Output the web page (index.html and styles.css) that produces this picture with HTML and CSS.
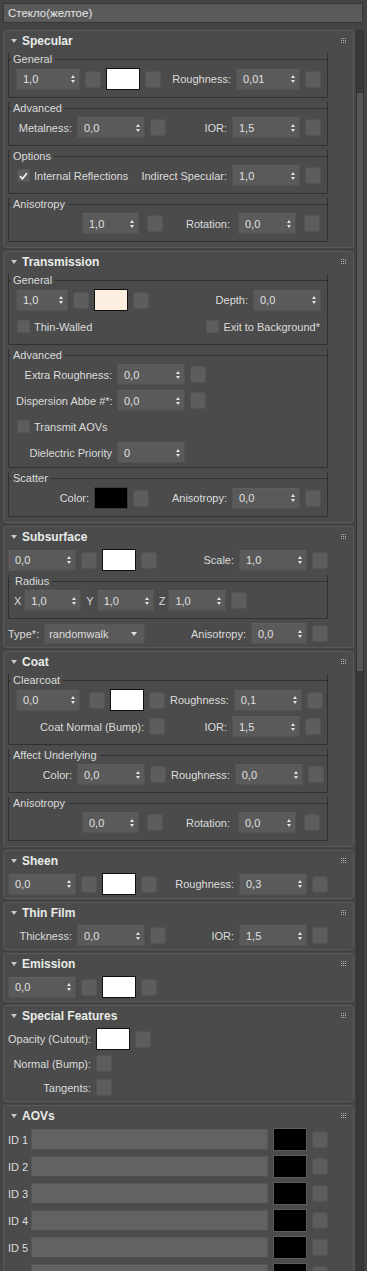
FILE: index.html
```html
<!DOCTYPE html>
<html lang="ru">
<head>
    <meta charset="UTF-8">
    <meta name="viewport" content="width=device-width, initial-scale=1.0">
    <title>Стекло(желтое)</title>
    <link rel="stylesheet" href="styles.css">
</head>
<body>

<div class="title">Стекло(желтое)</div>

<div class="main">
    <div class="rollouts">

        <!-- Specular -->
        <section class="panel">
            <div class="panel-head"><span class="tri"></span><span class="name">Specular</span><span class="grip"></span></div>
            <div class="panel-body">
                <div class="grp">
                    <div class="grp-head"><span>General</span></div>
                    <div class="row">
                        <div class="spin s64"><span>1,0</span><i class="arr"></i></div>
                        <div class="map"></div>
                        <div class="sw"></div>
                        <div class="map"></div>
                        <span class="lbl push">Roughness:</span>
                        <div class="spin s64"><span>0,01</span><i class="arr"></i></div>
                        <div class="map"></div>
                    </div>
                </div>
                <div class="grp">
                    <div class="grp-head"><span>Advanced</span></div>
                    <div class="row">
                        <span class="lbl r w56">Metalness:</span>
                        <div class="spin s68"><span>0,0</span><i class="arr"></i></div>
                        <div class="map"></div>
                        <span class="lbl push">IOR:</span>
                        <div class="spin s68"><span>1,5</span><i class="arr"></i></div>
                        <div class="map"></div>
                    </div>
                </div>
                <div class="grp">
                    <div class="grp-head"><span>Options</span></div>
                    <div class="row">
                        <label class="chk"><span class="box"><svg width="9" height="8" viewBox="0 0 9 8"><path d="M1 4.2l2.4 2.6L8 1" stroke="#f0f0f0" stroke-width="1.7" fill="none"/></svg></span>Internal Reflections</label>
                        <span class="lbl push">Indirect Specular:</span>
                        <div class="spin s68"><span>1,0</span><i class="arr"></i></div>
                        <div class="map"></div>
                    </div>
                </div>
                <div class="grp">
                    <div class="grp-head"><span>Anisotropy</span></div>
                    <div class="row aniso">
                        <div class="spin s57"><span>1,0</span><i class="arr"></i></div>
                        <div class="map"></div>
                        <span class="lbl push">Rotation:</span>
                        <div class="spin s58"><span>0,0</span><i class="arr"></i></div>
                        <div class="map"></div>
                    </div>
                </div>
            </div>
        </section>

        <!-- Transmission -->
        <section class="panel">
            <div class="panel-head"><span class="tri"></span><span class="name">Transmission</span><span class="grip"></span></div>
            <div class="panel-body">
                <div class="grp">
                    <div class="grp-head"><span>General</span></div>
                    <div class="row">
                        <div class="spin s52"><span>1,0</span><i class="arr"></i></div>
                        <div class="map"></div>
                        <div class="sw cream"></div>
                        <div class="map"></div>
                        <span class="lbl push">Depth:</span>
                        <div class="spin s68"><span>0,0</span><i class="arr"></i></div>
                    </div>
                    <div class="row">
                        <label class="chk"><span class="box"></span>Thin-Walled</label>
                        <label class="chk push"><span class="box"></span>Exit to Background*</label>
                    </div>
                </div>
                <div class="grp loose">
                    <div class="grp-head"><span>Advanced</span></div>
                    <div class="row">
                        <span class="lbl r w96">Extra Roughness:</span>
                        <div class="spin s68"><span>0,0</span><i class="arr"></i></div>
                        <div class="map"></div>
                    </div>
                    <div class="row">
                        <span class="lbl r w96">Dispersion Abbe #*:</span>
                        <div class="spin s68"><span>0,0</span><i class="arr"></i></div>
                        <div class="map"></div>
                    </div>
                    <div class="row">
                        <label class="chk"><span class="box"></span>Transmit AOVs</label>
                    </div>
                    <div class="row">
                        <span class="lbl r w96">Dielectric Priority</span>
                        <div class="spin s68"><span>0</span><i class="arr"></i></div>
                    </div>
                </div>
                <div class="grp">
                    <div class="grp-head"><span>Scatter</span></div>
                    <div class="row">
                        <span class="lbl r w73">Color:</span>
                        <div class="sw black"></div>
                        <div class="map"></div>
                        <span class="lbl push">Anisotropy:</span>
                        <div class="spin s68"><span>0,0</span><i class="arr"></i></div>
                        <div class="map"></div>
                    </div>
                </div>
            </div>
        </section>

        <!-- Subsurface -->
        <section class="panel">
            <div class="panel-head"><span class="tri"></span><span class="name">Subsurface</span><span class="grip"></span></div>
            <div class="panel-body">
                <div class="row">
                    <div class="spin s68"><span>0,0</span><i class="arr"></i></div>
                    <div class="map"></div>
                    <div class="sw"></div>
                    <div class="map"></div>
                    <span class="lbl push">Scale:</span>
                    <div class="spin s68"><span>1,0</span><i class="arr"></i></div>
                    <div class="map"></div>
                </div>
                <div class="grp radius">
                    <div class="grp-head"><span>Radius</span></div>
                    <div class="row">
                        <span class="axis">X<div class="spin s57"><span>1,0</span><i class="arr"></i></div></span>
                        <span class="axis">Y<div class="spin s57"><span>1,0</span><i class="arr"></i></div></span>
                        <span class="axis">Z<div class="spin s58"><span>1,0</span><i class="arr"></i></div></span>
                        <div class="map"></div>
                    </div>
                </div>
                <div class="row">
                    <span class="lbl">Type*:</span>
                    <div class="drop"><span>randomwalk</span><i class="caret"></i></div>
                    <span class="lbl push">Anisotropy:</span>
                    <div class="spin s56"><span>0,0</span><i class="arr"></i></div>
                    <div class="map"></div>
                </div>
            </div>
        </section>

        <!-- Coat -->
        <section class="panel">
            <div class="panel-head"><span class="tri"></span><span class="name">Coat</span><span class="grip"></span></div>
            <div class="panel-body">
                <div class="grp">
                    <div class="grp-head"><span>Clearcoat</span></div>
                    <div class="row">
                        <div class="spin s64 spaced"><span>0,0</span><i class="arr"></i></div>
                        <div class="map"></div>
                        <div class="sw"></div>
                        <div class="map"></div>
                        <span class="lbl push">Roughness:</span>
                        <div class="spin s68"><span>0,1</span><i class="arr"></i></div>
                        <div class="map"></div>
                    </div>
                    <div class="row">
                        <span class="lbl r w128">Coat Normal (Bump):</span>
                        <div class="map"></div>
                        <span class="lbl push">IOR:</span>
                        <div class="spin s68"><span>1,5</span><i class="arr"></i></div>
                        <div class="map"></div>
                    </div>
                </div>
                <div class="grp">
                    <div class="grp-head"><span>Affect Underlying</span></div>
                    <div class="row">
                        <span class="lbl r w56">Color:</span>
                        <div class="spin s68"><span>0,0</span><i class="arr"></i></div>
                        <div class="map"></div>
                        <span class="lbl push">Roughness:</span>
                        <div class="spin s68"><span>0,0</span><i class="arr"></i></div>
                        <div class="map"></div>
                    </div>
                </div>
                <div class="grp">
                    <div class="grp-head"><span>Anisotropy</span></div>
                    <div class="row aniso">
                        <div class="spin s57"><span>0,0</span><i class="arr"></i></div>
                        <div class="map"></div>
                        <span class="lbl push">Rotation:</span>
                        <div class="spin s58"><span>0,0</span><i class="arr"></i></div>
                        <div class="map"></div>
                    </div>
                </div>
            </div>
        </section>

        <!-- Sheen -->
        <section class="panel">
            <div class="panel-head"><span class="tri"></span><span class="name">Sheen</span><span class="grip"></span></div>
            <div class="panel-body">
                <div class="row">
                    <div class="spin s68"><span>0,0</span><i class="arr"></i></div>
                    <div class="map"></div>
                    <div class="sw"></div>
                    <div class="map"></div>
                    <span class="lbl push">Roughness:</span>
                    <div class="spin s68"><span>0,3</span><i class="arr"></i></div>
                    <div class="map"></div>
                </div>
            </div>
        </section>

        <!-- Thin Film -->
        <section class="panel">
            <div class="panel-head"><span class="tri"></span><span class="name">Thin Film</span><span class="grip"></span></div>
            <div class="panel-body">
                <div class="row">
                    <span class="lbl r w64">Thickness:</span>
                    <div class="spin s68"><span>0,0</span><i class="arr"></i></div>
                    <div class="map"></div>
                    <span class="lbl push">IOR:</span>
                    <div class="spin s68"><span>1,5</span><i class="arr"></i></div>
                    <div class="map"></div>
                </div>
            </div>
        </section>

        <!-- Emission -->
        <section class="panel">
            <div class="panel-head"><span class="tri"></span><span class="name">Emission</span><span class="grip"></span></div>
            <div class="panel-body">
                <div class="row">
                    <div class="spin s68"><span>0,0</span><i class="arr"></i></div>
                    <div class="map"></div>
                    <div class="sw"></div>
                    <div class="map"></div>
                </div>
            </div>
        </section>

        <!-- Special Features -->
        <section class="panel">
            <div class="panel-head"><span class="tri"></span><span class="name">Special Features</span><span class="grip"></span></div>
            <div class="panel-body stack">
                <div class="row">
                    <span class="lbl r w83">Opacity (Cutout):</span>
                    <div class="sw"></div>
                    <div class="map"></div>
                </div>
                <div class="row">
                    <span class="lbl r w83">Normal (Bump):</span>
                    <div class="map"></div>
                </div>
                <div class="row">
                    <span class="lbl r w83">Tangents:</span>
                    <div class="map"></div>
                </div>
            </div>
        </section>

        <!-- AOVs -->
        <section class="panel">
            <div class="panel-head"><span class="tri"></span><span class="name">AOVs</span><span class="grip"></span></div>
            <div class="panel-body">
                <div class="row aov"><span class="lbl w18">ID 1</span><div class="field"></div><div class="sw black tall"></div><div class="map"></div></div>
                <div class="row aov"><span class="lbl w18">ID 2</span><div class="field"></div><div class="sw black tall"></div><div class="map"></div></div>
                <div class="row aov"><span class="lbl w18">ID 3</span><div class="field"></div><div class="sw black tall"></div><div class="map"></div></div>
                <div class="row aov"><span class="lbl w18">ID 4</span><div class="field"></div><div class="sw black tall"></div><div class="map"></div></div>
                <div class="row aov"><span class="lbl w18">ID 5</span><div class="field"></div><div class="sw black tall"></div><div class="map"></div></div>
                <div class="row aov"><span class="lbl w18"></span><div class="field"></div><div class="sw black tall"></div><div class="map"></div></div>
            </div>
        </section>

    </div>

    <div class="scroll"><div class="thumb"></div></div>
</div>

</body>
</html>
```

FILE: styles.css
```css
html, body {
    margin: 0;
    height: 100%;
    overflow: hidden;
}
body {
    box-sizing: border-box;
    padding: 3px;
    background-color: #444444;
    font-family: "Liberation Sans", Arial, sans-serif;
    font-size: 11px;
    color: #dcdcdc;
}
.title {
    box-sizing: border-box;
    width: 360px;
    height: 20px;
    line-height: 18px;
    padding-left: 4px;
    background-color: #5a5a5a;
    border: 1px solid #373737;
    font-size: 11.5px;
    color: #e6e6e6;
}
.main {
    display: flex;
    margin-top: 7px;
}
.rollouts {
    width: 351px;
    flex: none;
}
.scroll {
    width: 6px;
    margin-left: 2px;
    background-color: #383838;
    border: 1px solid #333;
}
.thumb {
    margin-top: 62px;
    height: 578px;
    background-color: #565656;
}

/* rollout panels */
.panel {
    background-color: #4b4b4b;
    border: 1px solid #5a5a5a;
    border-radius: 3px;
    margin-bottom: 3px;
}
.panel-head {
    display: flex;
    align-items: center;
    height: 20px;
    margin-bottom: 2px;
    padding: 0 7px;
}
.tri {
    width: 0;
    height: 0;
    border-left: 3px solid transparent;
    border-right: 3px solid transparent;
    border-top: 4px solid #c8c8c8;
}
.name {
    flex: 1;
    margin-left: 5px;
    font-size: 12px;
    font-weight: bold;
    color: #e8ece8;
}
.grip {
    align-self: flex-start;
    margin-top: 6px;
    width: 6px;
    height: 6px;
    background:
        linear-gradient(90deg, #4b4b4b 1px, transparent 1px) 0 0 / 2px 2px,
        linear-gradient(#4b4b4b 1px, transparent 1px) 0 0 / 2px 2px,
        #b4b4b4;
}
.panel-body {
    padding: 0 25px 3px 4px;
}
.panel-body > * + * {
    margin-top: 4px;
}
.panel-body.stack > * + * {
    margin-top: 3px;
}

/* group boxes: the head draws the top edge of the box around its caption */
.grp {
    padding: 0 6px 7px 7px;
    border: 1px solid #303030;
    border-top: 0;
    border-radius: 0 0 2px 2px;
}
.grp:last-child {
    margin-bottom: 2px;
}
.grp-head {
    display: flex;
    height: 13px;
    line-height: 13px;
    margin: 0 -7px 2px -8px;
    color: #dadada;
}
.grp-head span {
    padding: 0 3px 0 2px;
}
.grp-head::before,
.grp-head::after {
    content: "";
    margin-top: 6px;
    border-top: 1px solid #303030;
}
.grp-head::before {
    width: 2px;
    border-left: 1px solid #303030;
    border-top-left-radius: 2px;
}
.grp-head::after {
    flex: 1;
    border-right: 1px solid #303030;
    border-top-right-radius: 2px;
}
.grp .row + .row {
    margin-top: 5px;
}
.grp.loose {
    padding-bottom: 4px;
}
.grp.radius {
    padding-left: 5px;
}
.grp.radius .grp-head {
    margin-left: -6px;
}
.grp.radius .grp-head span {
    padding-left: 4px;
}

/* rows */
.row {
    display: flex;
    align-items: center;
    gap: 5px;
    min-height: 21px;
}
.row.aniso {
    gap: 8px;
    padding-left: 66px;
    padding-right: 1px;
}
.lbl {
    white-space: nowrap;
    flex: none;
}
.r { text-align: right; }
.push { margin-left: auto; }
.w18 { width: 18px; }
.w56 { width: 56px; }
.w64 { width: 64px; }
.w73 { width: 73px; }
.w83 { width: 83px; }
.w96 { width: 96px; }
.w128 { width: 128px; }

/* spinners */
.spin {
    display: flex;
    align-items: center;
    flex: none;
    box-sizing: border-box;
    height: 21px;
    padding: 0 4px 0 6px;
    background-color: #5a5a5a;
    border: 1px solid #525252;
    border-top-color: #5f5f5f;
    color: #e0e0e0;
}
.spin span { flex: 1; }
.s52 { width: 52px; }
.s56 { width: 56px; }
.s57 { width: 57px; }
.s58 { width: 58px; }
.s64 { width: 64px; }
.s68 { width: 68px; }
.spin.spaced { margin-right: 4px; }
.arr {
    display: flex;
    flex-direction: column;
    gap: 2px;
}
.arr::before,
.arr::after {
    content: "";
    border-left: 2.5px solid transparent;
    border-right: 2.5px solid transparent;
}
.arr::before { border-bottom: 3px solid #e4e4e4; }
.arr::after { border-top: 3px solid #e4e4e4; }

.axis {
    display: flex;
    align-items: center;
    gap: 3px;
}

.drop {
    display: flex;
    align-items: center;
    box-sizing: border-box;
    width: 101px;
    height: 21px;
    padding: 0 7px 0 4px;
    background-color: #5a5a5a;
    border: 1px solid #525252;
}
.drop span { flex: 1; }
.caret {
    border-left: 3px solid transparent;
    border-right: 3px solid transparent;
    border-top: 4px solid #e0e0e0;
}

/* map buttons, swatches, checkboxes */
.map {
    flex: none;
    box-sizing: border-box;
    width: 16px;
    height: 17px;
    background-color: #5d5d5d;
    border: 1px solid #545454;
    border-radius: 3px;
}
.sw {
    flex: none;
    box-sizing: border-box;
    width: 34px;
    height: 22px;
    background-color: #ffffff;
    border: 1px solid #101010;
}
.sw.cream { background-color: #fcefdf; }
.sw.black {
    background-color: #000;
    border-color: #3a3a3a;
}
.sw.tall {
    height: 23px;
    border-color: #5c5c5c;
}
.chk {
    display: flex;
    align-items: center;
    gap: 4px;
    margin-left: 1px;
    white-space: nowrap;
}
.chk.push {
    margin-left: auto;
    margin-right: 1px;
}
.box {
    display: flex;
    align-items: center;
    justify-content: center;
    box-sizing: border-box;
    width: 13px;
    height: 13px;
    background-color: #5d5d5d;
    border: 1px solid #555;
}

/* AOV rows */
.row.aov {
    min-height: 23px;
}
.field {
    box-sizing: border-box;
    width: 237px;
    height: 21px;
    background-color: #626262;
    border: 1px solid #575757;
    border-bottom-color: #4e4e4e;
}
```
